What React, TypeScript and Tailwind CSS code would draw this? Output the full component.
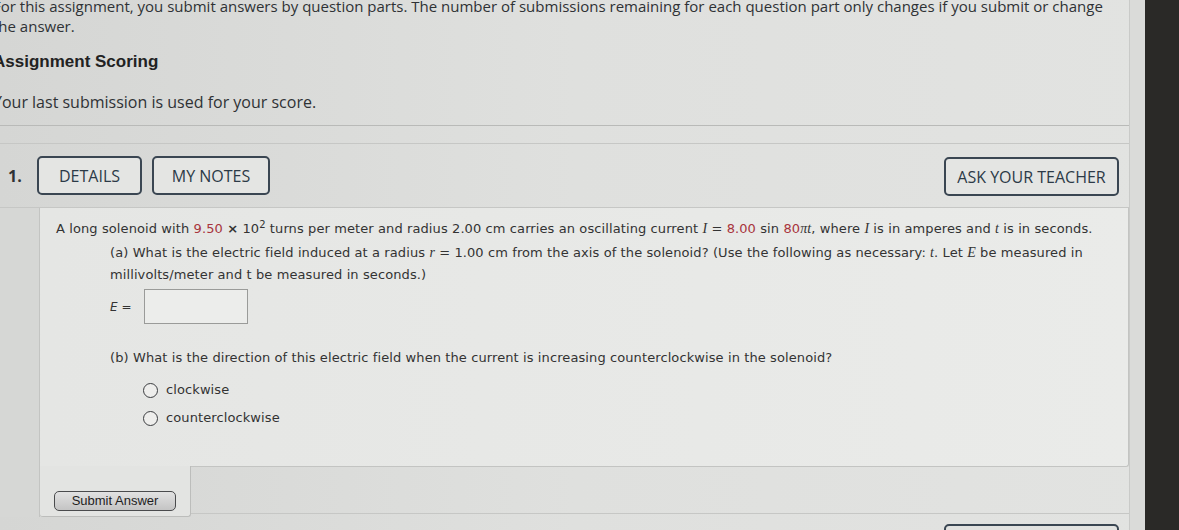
import React from 'react';

const sans = { fontFamily: '"Open Sans", "Liberation Sans", sans-serif' };

const Num = ({ children }: { children: React.ReactNode }) => (
  <span className="text-[#a8343c]">{children}</span>
);

const MathI = ({ children }: { children: React.ReactNode }) => (
  <span className="italic font-['Liberation_Serif',serif] text-[14px]">{children}</span>
);

const HeaderButton = ({ label, className = '' }: { label: string; className?: string }) => (
  <button
    className={`h-[39px] rounded-[5px] border-2 border-[#3a4652] bg-[#e4e5e3] text-[16px] font-medium text-[#2c3a47] font-['Open_Sans',sans-serif] ${className}`}
  >
    {label}
  </button>
);

const Radio = ({ label }: { label: string }) => (
  <label className="flex items-center h-[28px] gap-[8px]">
    <span className="w-[15px] h-[15px] rounded-full border-[1.5px] border-[#3b3d40] bg-[#eeeeec]" />
    <span>{label}</span>
  </label>
);

export default function App() {
  return (
    <div className="w-[1179px] h-[530px] overflow-hidden flex bg-[#2a2927]">
      <div className="w-[1145px] flex bg-gradient-to-r from-[#d5d6d4] via-[#dfe0de] to-[#e2e3e1]">
        <div className="w-[1130px] border-r border-[#c9cac8] text-[#2f3235]">
          {/* intro */}
          <div className="-ml-[7px] mt-[-4px] font-['Open_Sans',sans-serif]">
            <p className="text-[15px] leading-5 whitespace-nowrap">
              For this assignment, you submit answers by question parts. The number of submissions remaining for each question part only changes if you submit or change
              <br />
              the answer.
            </p>
            <h2 className="mt-[14px] text-[17px] leading-6 font-bold font-['Liberation_Sans',sans-serif] text-[#222]">
              Assignment Scoring
            </h2>
            <p className="mt-4 text-[16px] leading-6">Your last submission is used for your score.</p>
          </div>
          <div className="mt-[11px] border-t border-[#b9bab8]" />

          {/* question 1 */}
          <div className="mt-[17px] border-t border-[#c6c7c5]">
            <div className="h-[64px] flex items-center border-b border-[#c6c7c5]">
              <span className="w-[37px] pl-[8px] text-[16px] font-bold" style={sans}>1.</span>
              <HeaderButton label="DETAILS" className="w-[105px]" />
              <HeaderButton label="MY NOTES" className="w-[118px] ml-[10px]" />
              <HeaderButton label="ASK YOUR TEACHER" className="w-[175px] ml-auto mr-[10px] mt-[2px]" />
            </div>
            <div className="flex">
              <div className="w-[40px] shrink-0 border-r border-[#c3c4c2] bg-[#d6d7d5]" />
              <div className="flex-1">
                <div className="bg-gradient-to-r from-[#e5e6e4] to-[#eaebe9] border-r border-b border-[#c3c4c2] rounded-br-[3px] pl-[16px] pt-[10px] pb-[34px] text-[13px] leading-[22px] font-['DejaVu_Sans',Verdana,sans-serif] text-[#333] tracking-[0.1px]">
                  <p className="whitespace-nowrap">
                    A long solenoid with <Num>9.50</Num> <b>×</b> 10<sup className="text-[10px]">2</sup> turns per meter and radius 2.00 cm carries an oscillating current <MathI>I</MathI> = <Num>8.00</Num> sin <Num>80</Num><MathI>πt</MathI>, where <MathI>I</MathI> is in amperes and <MathI>t</MathI> is in seconds.
                  </p>
                  <div className="pl-[54px] mt-[2px]">
                    <p className="whitespace-nowrap">
                      (a) What is the electric field induced at a radius <MathI>r</MathI> = 1.00 cm from the axis of the solenoid? (Use the following as necessary: <MathI>t</MathI>. Let <MathI>E</MathI> be measured in
                      <br />
                      millivolts/meter and t be measured in seconds.)
                    </p>
                    <div className="mt-[3px] flex items-center gap-[12px]">
                      <span className="text-[12px] italic">E =</span>
                      <span className="w-[104px] h-[35px] border border-[#9a9b99] bg-[#ecedeb]" />
                    </div>
                    <p className="mt-[23px]">
                      (b) What is the direction of this electric field when the current is increasing counterclockwise in the solenoid?
                    </p>
                    <div className="mt-[7px] pl-[33px]">
                      <Radio label="clockwise" />
                      <Radio label="counterclockwise" />
                    </div>
                  </div>
                </div>
                <div className="relative -mt-px w-[151px] h-[51px] bg-[#e3e4e2] border-r border-b border-[#bcbdbb] rounded-b-[3px] pl-[14px] pt-[21px]">
                  <button className="w-[122px] h-[20px] rounded-[5px] border border-[#4a4b4d] bg-gradient-to-b from-[#e2e2e2] to-[#c4c4c4] text-[13px] leading-[18px] text-[#1e1e1e] font-['Liberation_Sans',sans-serif]">
                    Submit Answer
                  </button>
                </div>
              </div>
            </div>
          </div>

          {/* question 2 (partially visible) */}
          <div className="mt-[-4px] border-t border-[#c6c7c5] flex">
            <div className="ml-auto mr-[10px] mt-[10px] w-[175px] h-[39px] rounded-[5px] border-2 border-[#3a4652]" />
          </div>
        </div>
        <div className="flex-1 bg-[#dadbd9]" />
      </div>
    </div>
  );
}
